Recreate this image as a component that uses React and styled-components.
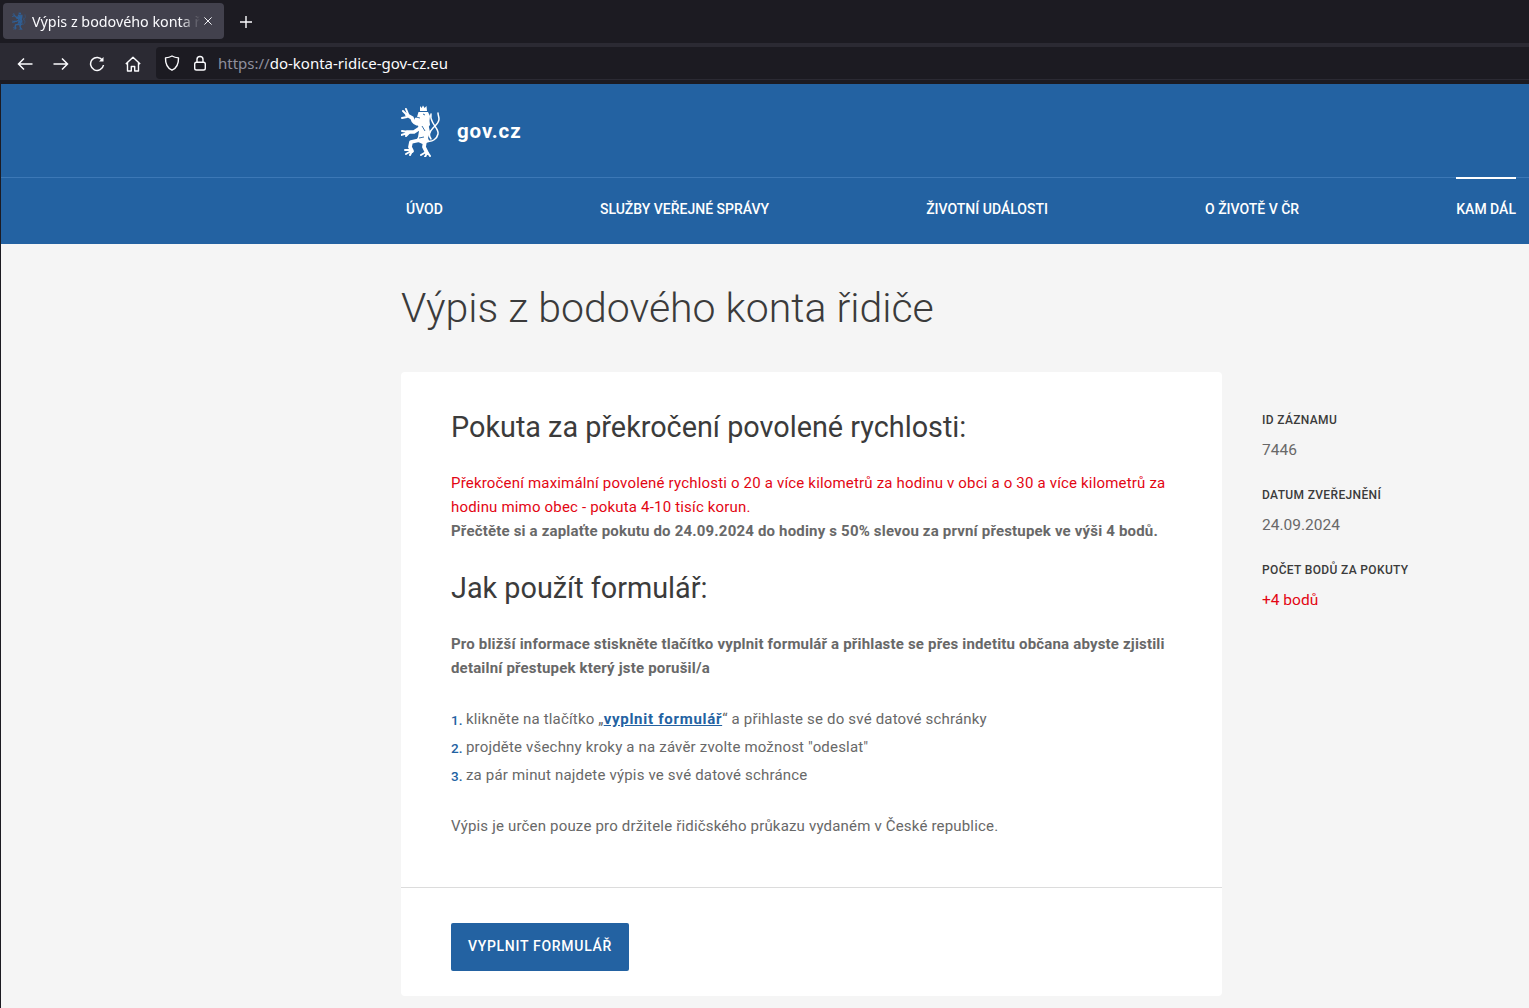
import React from 'react';
import styled, { createGlobalStyle } from 'styled-components';

const Global = createGlobalStyle`
  html, body { margin: 0; padding: 0; background: #f5f5f5; }
  body { font-family: Roboto, "Liberation Sans", sans-serif; overflow: hidden; }
  * { box-sizing: border-box; }
`;

const Page = styled.div`
  height: 1008px;
  overflow: hidden;
  display: flex;
  flex-direction: column;
`;

/* browser chrome */
const TabBar = styled.div`
  height: 43px;
  background: #1c1b22;
  display: flex;
  align-items: flex-start;
  padding: 3px 0 0 3px;
  flex: none;
`;
const Tab = styled.div`
  width: 221px;
  height: 36px;
  background: #42414d;
  border-radius: 4px;
  display: flex;
  align-items: center;
  padding-left: 9px;
  color: #fbfbfe;
  font: 14.3px "Noto Sans", sans-serif;
`;
const TabTitle = styled.span`
  margin-left: 6px;
  width: 168px;
  white-space: nowrap;
  overflow: hidden;
  -webkit-mask-image: linear-gradient(90deg, #000 148px, transparent 168px);
  mask-image: linear-gradient(90deg, #000 148px, transparent 168px);
`;
const TabClose = styled.svg`
  margin-left: 4px;
`;
const NewTab = styled.svg`
  margin: 11px 0 0 14px;
`;
const NavBar = styled.div`
  height: 37px;
  background: #2b2a33;
  display: flex;
  align-items: center;
  flex: none;
  padding-left: 17px;
  color: #fbfbfe;
`;
const NavIcon = styled.svg`
  margin-right: 20px;
  margin-top: 4px;
  flex: none;
`;
const UrlBar = styled.div`
  flex: 1;
  height: 32px;
  margin-left: -5px;
  margin-top: 2px;
  background: #1c1b22;
  border-radius: 4px 0 0 4px;
  display: flex;
  align-items: center;
  padding-left: 8px;
  font: 15px "Noto Sans", sans-serif;
  color: #fbfbfe;
`;
const UrlIcon = styled.svg`
  margin-right: 12px;
  flex: none;
`;
const UrlScheme = styled.span`
  color: #8f8f9d;
  margin-left: -2px;
`;
const ChromeEdge = styled.div`
  height: 4px;
  background: #1c1b22;
  flex: none;
`;

/* site */
const Site = styled.div`
  flex: 1;
  border-left: 1px solid #1c1b22;
  background: #f5f5f5;
`;
const Header = styled.header`
  background: #2362a2;
  color: #fff;
`;
const Brand = styled.div`
  height: 93px;
  padding-left: 400px;
  display: flex;
  align-items: center;
`;
const BrandName = styled.span`
  margin-left: 16px;
  font-size: 20.5px;
  font-weight: 700;
  letter-spacing: 0.9px;
`;
const MainNav = styled.nav`
  height: 67px;
  border-top: 1px solid #3c78b6;
  padding: 0 13px 0 405px;
  display: flex;
  justify-content: space-between;
`;
const NavLink = styled.a`
  margin-top: -1px;
  height: 68px;
  border-top: 2px solid ${p => (p.$active ? '#fff' : 'transparent')};
  padding-bottom: 6px;
  display: flex;
  align-items: center;
  font-size: 14px;
  font-weight: 500;
  color: #fff;
  text-transform: uppercase;
  white-space: nowrap;
`;
const Main = styled.main`
  padding: 36px 0 0 400px;
`;
const Title = styled.h1`
  margin: 0 0 36px;
  font-size: 41px;
  line-height: 56px;
  font-weight: 300;
  color: #3b3b3b;
`;
const Columns = styled.div`
  display: flex;
  align-items: flex-start;
`;
const Card = styled.section`
  width: 821px;
  background: #fff;
  border-radius: 4px;
`;
const CardBody = styled.div`
  padding: 35px 50px 49px;
  font-size: 15px;
  line-height: 24px;
  letter-spacing: 0.18px;
  color: #686868;
  border-bottom: 1px solid #dcdcdc;
`;
const CardFooter = styled.div`
  padding: 35px 50px 25px;
`;
const Heading = styled.h2`
  margin: 0 0 24px;
  font-size: 28.8px;
  line-height: 40px;
  font-weight: 400;
  color: #3b3b3b;
  letter-spacing: 0;
`;
const Para = styled.p`
  margin: 0 0 ${p => p.$gap || '0'};
  color: ${p => (p.$red ? '#e30613' : '#686868')};
  font-weight: ${p => (p.$bold ? 700 : 400)};
`;
const Steps = styled.ol`
  margin: 0 0 25px;
  padding: 0;
  list-style: none;
`;
const Step = styled.li`
  display: flex;
  align-items: baseline;
  height: 28px;
  line-height: 28px;
`;
const StepNum = styled.span`
  width: 15px;
  font-size: 13.5px;
  font-weight: 500;
  color: #2362a2;
  transform: translateY(1px);
`;
const FormLink = styled.a`
  color: #2362a2;
  font-weight: 700;
  letter-spacing: 0.72px;
  text-decoration: underline;
`;
const Button = styled.button`
  width: 178px;
  height: 48px;
  background: #2362a2;
  border: 0;
  border-radius: 2px;
  color: #fff;
  font-family: Roboto, sans-serif;
  font-size: 14px;
  font-weight: 500;
  letter-spacing: 0.7px;
  text-transform: uppercase;
  padding: 0 0 2px;
`;
const Aside = styled.aside`
  margin-left: 40px;
  padding-top: 37px;
`;
const MetaLabel = styled.div`
  font-size: 12px;
  line-height: 22px;
  font-weight: 500;
  letter-spacing: 0.35px;
  color: #3b3b3b;
  text-transform: uppercase;
`;
const MetaValue = styled.div`
  margin: 7px 0 22px;
  font-size: 15.5px;
  line-height: 24px;
  color: ${p => (p.$red ? '#e30613' : '#686868')};
`;

function Lion({ width = 40, color = '#fff', bg = '#2362a2' }) {
  return (
    <svg width={width} height={width * 1.3} viewBox="0 0 40 52" fill={color}>
      {/* crown */}
      <path d="M19 6V1l1.600 2L22 .4 23.600 3 25.500 1 26 6z" />
      {/* head and mane */}
      <path d="M17.500 7h9.500l2 4-.5 5 .5 4-2.500 3-9.500-3-2-3-2-1 1-3 2-1z" />
      {/* body */}
      <path d="M16.500 17l11 3 1.500 7-2 6 1.500 4-7 2-6.500-3 2-4 1-6z" />
      {/* raised foreleg */}
      <path d="M19 19c-4 0-7-2-8-6l-5-3" fill="none" stroke={color} strokeWidth="3.600" strokeLinecap="round" />
      <path d="M7 11L2 6M7 9L5 4M6 12l-5 1" fill="none" stroke={color} strokeWidth="2" strokeLinecap="round" />
      {/* lower foreleg */}
      <path d="M19 23l-6 4-7 0" fill="none" stroke={color} strokeWidth="3.600" strokeLinecap="round" />
      <path d="M7 27l-6-1M7 28l-7 2M8 28l-3 3" fill="none" stroke={color} strokeWidth="2" strokeLinecap="round" />
      {/* hind legs */}
      <path d="M19 35l-9 2-1 5 2 4" fill="none" stroke={color} strokeWidth="3.800" strokeLinecap="round" strokeLinejoin="round" />
      <path d="M10 45l-6 0M10 46l-5 3M11 46l-2 4" fill="none" stroke={color} strokeWidth="2" strokeLinecap="round" />
      <path d="M24 36l-1 6 3 6" fill="none" stroke={color} strokeWidth="3.800" strokeLinecap="round" strokeLinejoin="round" />
      <path d="M25 47l-5 3M26 48l-2 4M27 48l2 3" fill="none" stroke={color} strokeWidth="2" strokeLinecap="round" />
      {/* double tail */}
      <path d="M27 36c4 1 9-2 10-7 .8-4-3-7-5-11-1.500-3-3-5-2-9M30 34c-3-4-1-8 2-11 2-2 6-5 6-9 0-2-1-4-1-6" fill="none" stroke={color} strokeWidth="1.500" strokeLinecap="round" />
      {/* mouth and leg cuts */}
      <path d="M15 12l4 1M22 9l2 1M21 21l3 5M18 33l5-1" fill="none" stroke={bg} strokeWidth="0.900" />
    </svg>
  );
}

function App() {
  return (
    <>
      <Global />
      <Page>
        <TabBar>
          <Tab>
            <Lion width={14} color="#2f5f95" bg="#42414d" />
            <TabTitle>Výpis z bodového konta řidiče</TabTitle>
            <TabClose width="8" height="8" viewBox="0 0 10 10" fill="none" stroke="#fbfbfe" strokeWidth="1.200">
              <path d="M.5.5l9 9M9.500.5l-9 9" />
            </TabClose>
          </Tab>
          <NewTab width="16" height="16" viewBox="0 0 16 16" fill="none" stroke="#fbfbfe" strokeWidth="1.400">
            <path d="M8 2v12M2 8h12" />
          </NewTab>
        </TabBar>
        <NavBar>
          <NavIcon width="16" height="16" viewBox="0 0 16 16" fill="none" stroke="currentColor" strokeWidth="1.500">
            <path d="M1.500 8h14M7 2.500L1.500 8 7 13.500" />
          </NavIcon>
          <NavIcon width="16" height="16" viewBox="0 0 16 16" fill="none" stroke="currentColor" strokeWidth="1.500">
            <path d="M.5 8h14M9 2.500L14.500 8 9 13.500" />
          </NavIcon>
          <NavIcon width="16" height="16" viewBox="0 0 16 16" fill="none" stroke="currentColor" strokeWidth="1.500">
            <path d="M13.600 4.500A6.500 6.500 0 1 0 14.500 9" />
            <path d="M14.500 1v4.500H10" fill="currentColor" stroke="none" />
          </NavIcon>
          <NavIcon width="16" height="16" viewBox="0 0 16 16" fill="none" stroke="currentColor" strokeWidth="1.400">
            <path d="M.8 8L8 1.200 15.200 8M2.500 6.800V15h3.800v-4.500h3.400V15h3.800V6.800" strokeLinejoin="round" />
          </NavIcon>
          <UrlBar>
            <UrlIcon width="16" height="16" viewBox="0 0 16 16" fill="none" stroke="currentColor" strokeWidth="1.400">
              <path d="M8 1c2 1.200 4 1.700 6.500 1.900C14.700 9 12.500 13 8 15.200 3.500 13 1.300 9 1.500 2.900 4 2.700 6 2.200 8 1z" strokeLinejoin="round" />
            </UrlIcon>
            <UrlIcon width="16" height="16" viewBox="0 0 16 16" fill="none" stroke="currentColor" strokeWidth="1.400">
              <rect x="2.700" y="7.200" width="10.600" height="7.800" rx="1.800" />
              <path d="M5 7V4.500a3 3 0 0 1 6 0V7" />
            </UrlIcon>
            <UrlScheme>https://</UrlScheme>do-konta-ridice-gov-cz.eu
          </UrlBar>
        </NavBar>
        <ChromeEdge />
        <Site>
          <Header>
            <Brand>
              <Lion />
              <BrandName>gov.cz</BrandName>
            </Brand>
            <MainNav>
              <NavLink>Úvod</NavLink>
              <NavLink>Služby veřejné správy</NavLink>
              <NavLink>Životní události</NavLink>
              <NavLink>O životě v ČR</NavLink>
              <NavLink $active>Kam dál</NavLink>
            </MainNav>
          </Header>
          <Main>
            <Title>Výpis z bodového konta řidiče</Title>
            <Columns>
              <Card>
                <CardBody>
                  <Heading>Pokuta za překročení povolené rychlosti:</Heading>
                  <Para $red>Překročení maximální povolené rychlosti o 20 a více kilometrů za hodinu v obci a o 30 a více kilometrů za hodinu mimo obec - pokuta 4-10 tisíc korun.</Para>
                  <Para $bold $gap="25px">Přečtěte si a zaplaťte pokutu do 24.09.2024 do hodiny s 50% slevou za první přestupek ve výši 4 bodů.</Para>
                  <Heading>Jak použít formulář:</Heading>
                  <Para $bold $gap="25px">Pro bližší informace stiskněte tlačítko vyplnit formulář a přihlaste se přes indetitu občana abyste zjistili detailní přestupek který jste porušil/a</Para>
                  <Steps>
                    <Step><StepNum>1.</StepNum><span>klikněte na tlačítko „<FormLink>vyplnit formulář</FormLink>“ a přihlaste se do své datové schránky</span></Step>
                    <Step><StepNum>2.</StepNum><span>projděte všechny kroky a na závěr zvolte možnost "odeslat"</span></Step>
                    <Step><StepNum>3.</StepNum><span>za pár minut najdete výpis ve své datové schránce</span></Step>
                  </Steps>
                  <Para>Výpis je určen pouze pro držitele řidičského průkazu vydaném v České republice.</Para>
                </CardBody>
                <CardFooter>
                  <Button>Vyplnit formulář</Button>
                </CardFooter>
              </Card>
              <Aside>
                <MetaLabel>ID záznamu</MetaLabel>
                <MetaValue>7446</MetaValue>
                <MetaLabel>Datum zveřejnění</MetaLabel>
                <MetaValue>24.09.2024</MetaValue>
                <MetaLabel>Počet bodů za pokuty</MetaLabel>
                <MetaValue $red>+4 bodů</MetaValue>
              </Aside>
            </Columns>
          </Main>
        </Site>
      </Page>
    </>
  );
}

export default App;
